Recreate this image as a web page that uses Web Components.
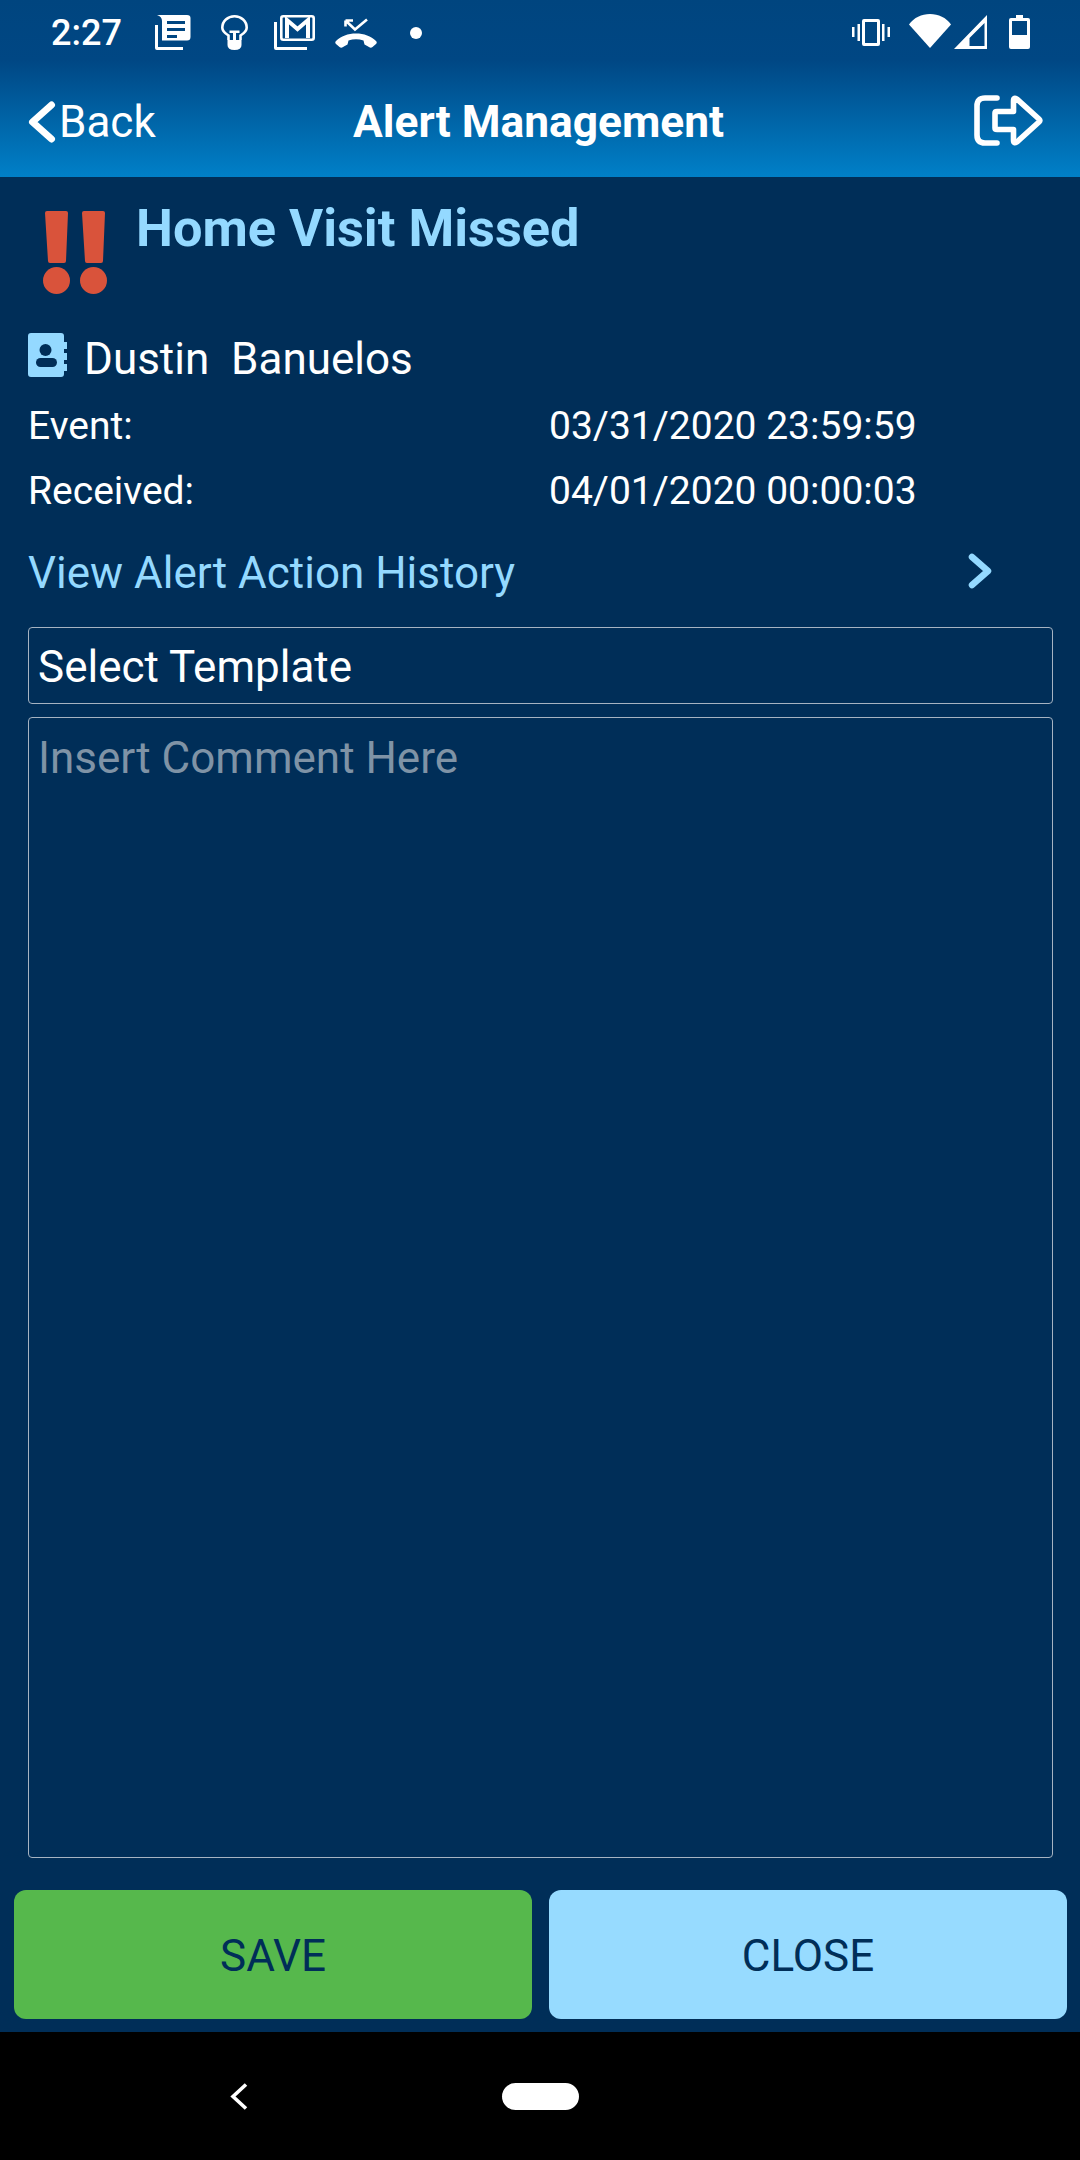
<!DOCTYPE html>
<html lang="en"><head><meta charset="utf-8"><title>Alert Management</title>
<style>
html,body{margin:0;padding:0;background:#002e58}
body{width:1080px;height:2160px;font-family:Roboto,"Liberation Sans",sans-serif;color:#fff;overflow:hidden}
app-screen{width:1080px;height:2160px}
</style></head><body>
<app-screen>
  <app-header></app-header>
  <alert-title>Home Visit Missed</alert-title>
  <person-row>Dustin&nbsp; Banuelos</person-row>
  <info-row label="Event:" value="03/31/2020 23:59:59"></info-row>
  <info-row label="Received:" value="04/01/2020 00:00:03"></info-row>
  <link-row>View Alert Action History</link-row>
  <select-box>Select Template</select-box>
  <comment-box>Insert Comment Here</comment-box>
  <button-bar></button-bar>
  <nav-bar></nav-bar>
</app-screen>
<script>
function def(name, html){
  customElements.define(name, class extends HTMLElement{
    constructor(){super();const s=this.attachShadow({mode:'open'});
      if(typeof html!=='function')s.innerHTML=html;}
    connectedCallback(){ if(typeof html==='function'){this.shadowRoot.innerHTML=html(this);} }
  });
}
def('app-screen',`<style>:host{display:flex;flex-direction:column}</style><slot></slot>`);
def('app-header',`<style>
:host{display:block;height:177px;box-sizing:border-box;background:linear-gradient(#00457f 0,#004784 34%,#0080c8 100%);color:#fff;flex:none}
.st{display:flex;align-items:center;height:66px;padding-left:51px;box-sizing:border-box;position:relative}
.time{font-size:36px;font-weight:500;line-height:66px;width:104px}
svg{display:block;flex:none;fill:#fff}
.nav{display:flex;align-items:center;height:111px;box-sizing:border-box;padding-left:28px;position:relative}
.back{font-size:44px;margin-left:3px;width:294px;line-height:60px}
.title{font-size:44.3px;font-weight:700;line-height:60px;width:620px}
</style>
<div class="st">
<span class="time">2:27</span>
<svg width="36" height="35" viewBox="0 0 36 35" style="margin-top:-1px"><path fill-rule="evenodd" d="M2 0H32Q35.500 0 35.500 3V22Q35.500 25.500 32 25.500H7V6Q7 1.500 2 0ZM12 6V9H30V6ZM12 13V16H30V13ZM12 20V23H22V20Z"/><path d="M0 10H3V32H28V35H2Q0 35 0 33Z"/></svg>
<svg width="27" height="35" viewBox="0 0 27 35" style="margin-left:30px;margin-top:-1px"><path fill="none" stroke="#fff" stroke-width="2.600" d="M7.500 25V20.500C3.500 18 1.300 15.500 1.300 12.700 1.300 6 6.800 1.300 13.500 1.300S25.700 6 25.700 12.700C25.700 15.500 23.500 18 19.500 20.500V25"/><path d="M6.500 25H20.500V30Q20.500 35 13.500 35T6.500 30Z"/><path d="M8.500 15.500H18.500V18H15V26H12V18H8.500Z"/></svg>
<svg width="41" height="35" viewBox="0 0 41 35" style="margin-left:26px;margin-top:-1px"><rect x="7.300" y="1.300" width="32.400" height="23.400" rx="2" fill="none" stroke="#fff" stroke-width="2.600"/><path fill="none" stroke="#fff" stroke-width="4" d="M13 23V5L23.500 14 34 5V23"/><path d="M0 7H3V32H33V35H2Q0 35 0 33Z"/></svg>
<svg width="42" height="30" viewBox="0 0 42 30" style="margin-left:20px;margin-top:-1px"><path fill="none" stroke="#fff" stroke-width="2.600" d="M10.500 2.500 20 11.500 32 1.500M10.500 2.500V8.500M10.500 2.500H18"/><path d="M21 15.500C13 15.500 6 18 1 23 0 24 0 25 1 26L4.500 29C5.500 30 7 30 8 29L12.500 26.500 13.500 22.500Q21 20 28.500 22.500L29.500 26.500 34 29C35 30 36.500 30 37.500 29L41 26C42 25 42 24 41 23 36 18 29 15.500 21 15.500Z"/></svg>
<svg width="12" height="12" viewBox="0 0 12 12" style="margin-left:33px"><circle cx="6" cy="6" r="6"/></svg>
<span style="flex:1"></span>
<svg width="38" height="27" viewBox="0 0 38 27" style="margin-top:-2px"><path fill-rule="evenodd" d="M12 0H26Q28 0 28 2V25Q28 27 26 27H12Q10 27 10 25V2Q10 0 12 0ZM13 3V24H25V3Z"/><path d="M5.500 5H8V22H5.500ZM0 8H2.500V18H0ZM30 5H32.500V22H30ZM35.500 8H38V18H35.500Z"/></svg>
<svg width="42" height="34" viewBox="0 0 42 34" style="margin-left:19px;margin-top:-4px"><path d="M0 10.500C5 3.500 12.500 0 21 0S37 3.500 42 10.500L21 34Z"/></svg>
<svg width="34" height="34" viewBox="0 0 34 34" style="margin-left:3px;margin-top:-2px"><path fill-rule="evenodd" d="M33 0V34H0ZM30.500 8 15.500 23V31H30.500Z"/></svg>
<svg width="21" height="34" viewBox="0 0 21 34" style="margin-left:21px;margin-right:50px;margin-top:-2px"><path fill-rule="evenodd" d="M7 0H14V3H19Q21 3 21 5V32Q21 34 19 34H2Q0 34 0 32V5Q0 3 2 3H7ZM3 6V20H18V6Z"/></svg>
</div>
<div class="nav">
<svg width="28" height="42" viewBox="0 0 28 42"><path fill="none" stroke="#fff" stroke-width="7" stroke-linecap="round" stroke-linejoin="round" d="M23.500 4 4.500 21 23.500 38"/></svg>
<span class="back">Back</span>
<span class="title">Alert Management</span>
<svg width="69" height="51" viewBox="0 0 69 51" style="position:absolute;left:974px;top:29px"><path fill="none" stroke="#fff" stroke-width="5.600" stroke-linejoin="round" stroke-linecap="round" d="M23 3H11Q3 3 3 11V40Q3 48 11 48H23M21 18Q21 16.500 23 16.500H39.500V6Q39.500 1.500 43.500 4.500L65 24Q66.500 25.500 65 27L43.500 46.500Q39.500 49.500 39.500 45V34.500H23Q21 34.500 21 33Z"/></svg>
</div>`);
def('alert-title',`<style>
:host{display:flex;height:140px;box-sizing:border-box;padding:34px 0 0 43px;flex:none}
svg{display:block;flex:none}
.t{font-size:52.3px;font-weight:700;color:#94d9ff;line-height:46px;margin-left:29px;margin-top:-6px}
</style>
<svg width="64" height="83" viewBox="0 0 64 83"><path fill="#d9533b" d="M4 0H23Q25 0 25 2L23 50Q23 52 21 52H7Q5 52 5 50L2 2Q2 0 4 0ZM41 0H60Q62 0 62 2L60 50Q60 52 58 52H44Q42 52 42 50L39 2Q39 0 41 0Z"/><ellipse fill="#d9533b" cx="13.500" cy="69.500" rx="13.500" ry="13.500"/><ellipse fill="#d9533b" cx="50.500" cy="69.500" rx="13.500" ry="13.500"/></svg>
<span class="t"><slot></slot></span>`);
def('person-row',`<style>
:host{display:flex;align-items:center;height:43px;padding-left:28px;margin-top:16px;margin-bottom:18px;flex:none}
svg{display:block;flex:none}
.n{font-size:44px;margin-left:17px;line-height:50px;white-space:pre;position:relative;top:4px}
</style>
<svg width="39" height="44" viewBox="0 0 39 44"><path fill-rule="evenodd" fill="#94d9ff" d="M3 0H33Q36 0 36 3V9H39V16H36V20H39V27H36V31H39V38H36V41Q36 44 33 44H3Q0 44 0 41V3Q0 0 3 0Z"/><circle cx="17.500" cy="17" r="6" fill="#002e58"/><rect x="8" y="25" width="21" height="9" rx="4.500" fill="#002e58"/></svg>
<span class="n"><slot></slot></span>`);
def('info-row',(el)=>`<style>
:host{display:flex;height:65px;line-height:65px;padding-left:28px;font-size:39px;flex:none;color:#fff}
.l{width:521px}
</style>
<span class="l">${el.getAttribute('label')||''}</span><span>${el.getAttribute('value')||''}</span>`);
def('link-row',`<style>
:host{display:flex;align-items:center;height:48px;margin-top:24px;padding-left:28px;font-size:44px;line-height:50px;color:#94d9ff;position:relative;flex:none}
span{position:relative;top:1px}
svg{position:absolute;left:968px;top:5px}
</style>
<span><slot></slot></span>
<svg width="24" height="36" viewBox="0 0 24 36"><path fill="none" stroke="#94d9ff" stroke-width="6.500" stroke-linecap="round" stroke-linejoin="round" d="M4 4 20 18 4 32"/></svg>`);
def('select-box',`<style>
:host{display:block;box-sizing:border-box;margin:31px 27px 0 28px;height:77px;border:1px solid #a6b3c2;border-radius:4px;padding:2px 0 0 9px;font-size:44px;line-height:75px;color:#fff;flex:none}
</style><slot></slot>`);
def('comment-box',`<style>
:host{display:block;box-sizing:border-box;margin:13px 27px 0 28px;height:1141px;border:1px solid #a6b3c2;border-radius:4px;padding:12px 0 0 9px;font-size:44px;line-height:56px;color:#7f93a6;flex:none}
</style><slot></slot>`);
def('button-bar',`<style>
:host{display:flex;gap:17px;padding:32px 13px 13px 14px;background:#002e58;flex:none}
div{flex:1;height:129px;box-sizing:border-box;padding-top:2px;border-radius:12px;display:flex;align-items:center;justify-content:center;font-size:44px;color:#002e58}
.s{background:#56b84c}.c{background:#97dbff}
</style><div class="s">SAVE</div><div class="c">CLOSE</div>`);
def('nav-bar',`<style>
:host{display:block;height:128px;background:#000;position:relative;flex:none}
svg{position:absolute;left:230px;top:51px}
i{position:absolute;left:502px;top:51px;width:77px;height:27px;border-radius:14px;background:#fff}
</style>
<svg width="18" height="27" viewBox="0 0 18 27"><path fill="none" stroke="#fff" stroke-width="3.600" d="M16 1.500 3 13.500 16 25.500"/></svg><i></i>`);
</script>
</body></html>
